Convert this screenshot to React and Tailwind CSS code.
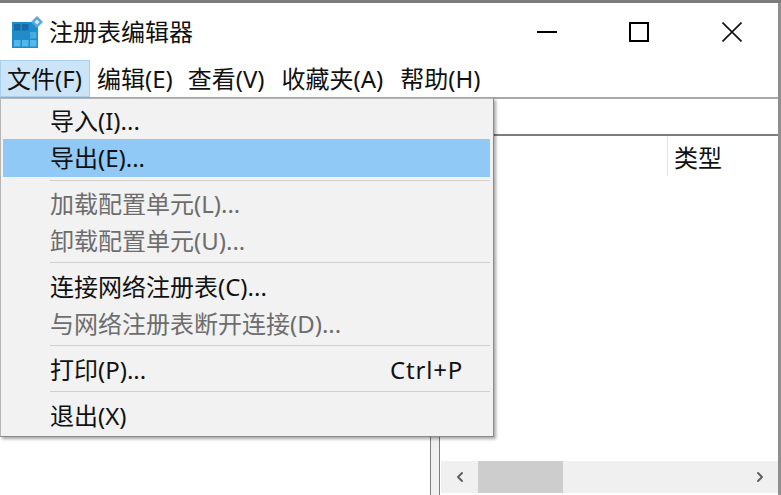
import React from 'react';
import { ChevronLeft, ChevronRight } from 'lucide-react';

const font = "font-['Noto_Sans','Noto_Sans_CJK_SC',sans-serif]";

const RegeditIcon = () => (
  <svg width="31" height="32" viewBox="0 0 31 32" className="shrink-0">
    <rect x="0" y="6" width="26" height="26" fill="#1a8fd0" />
    <rect x="2" y="8" width="6.5" height="6.5" fill="#176aa6" />
    <rect x="10" y="8" width="6.5" height="6.5" fill="#176aa6" />
    <rect x="2" y="16" width="6.5" height="6.5" fill="#2688c4" />
    <rect x="10" y="16" width="6.5" height="6.5" fill="#2688c4" />
    <rect x="18" y="16" width="6.5" height="6.5" fill="#48ace0" />
    <rect x="2" y="24" width="6.5" height="6.5" fill="#55b8e8" />
    <rect x="10" y="24" width="6.5" height="6.5" fill="#55b8e8" />
    <rect x="18" y="24" width="6.5" height="6.5" fill="#55b8e8" />
    <path d="M25 0 L31 6 L25 12 L19 6 Z" fill="#5aa9d6" />
    <path d="M25 3.5 L27.5 6 L25 8.5 L22.5 6 Z" fill="#d5ecf8" />
  </svg>
);

const MenuItem = ({ label, shortcut, disabled, active }) => (
  <div
    className={`flex items-center justify-between pl-[47px] pr-[27px] text-[24px] leading-none ${
      active ? 'h-[38px] bg-[#90c8f6] text-[#111]' : disabled ? 'h-[37px] text-[#6d6d6d]' : 'h-[37px] text-[#111]'
    }`}
  >
    <span>{label}</span>
    {shortcut && <span className="tracking-[0.8px]">{shortcut}</span>}
  </div>
);

const Divider = ({ className }) => <div className={`ml-[47px] h-px bg-[#d0d0d0] ${className}`} />;

export default function App() {
  return (
    <div className={`${font} relative flex flex-col w-[781px] h-[495px] overflow-hidden bg-white text-[#111]`}>
      {/* what is left of the window behind */}
      <div className="h-[3px] shrink-0 bg-[#7c7c7c]" />

      <div className="flex flex-col flex-1 min-h-0 border-r-[3px] border-[#8f8f8f]">
        {/* title bar */}
        <div className="flex items-center h-[57px] shrink-0 pl-[12px]">
          <RegeditIcon />
          <span className="ml-[6px] text-[24px] leading-none">注册表编辑器</span>
          <div className="flex items-center ml-auto">
            <div className="w-[20px] h-[2px] bg-black mr-[72px]" />
            <div className="w-[20px] h-[20px] border-2 border-black mr-[73px]" />
            <svg width="20" height="20" viewBox="0 0 20 20" className="mr-[36px]">
              <path d="M0.5 0.5 L19.5 19.5 M19.5 0.5 L0.5 19.5" stroke="#111" strokeWidth="1.6" />
            </svg>
          </div>
        </div>

        {/* menu bar */}
        <div className="flex items-stretch h-[39px] shrink-0 border-b-2 border-[#a8a8a8] text-[24px] leading-none">
          <div className="flex items-center w-[90px] pl-[6px] pt-[1px] bg-[#cce4f7] border border-[#a9d0ee]">文件(F)</div>
          <div className="flex items-center pt-[1px] ml-[7px]">编辑(E)</div>
          <div className="flex items-center pt-[1px] ml-[15px]">查看(V)</div>
          <div className="flex items-center pt-[1px] ml-[17px]">收藏夹(A)</div>
          <div className="flex items-center pt-[1px] ml-[17px]">帮助(H)</div>
        </div>

        {/* address bar */}
        <div className="h-[37px] shrink-0 border-b-2 border-[#7d7d7d]" />

        {/* panes */}
        <div className="flex flex-1 min-h-0">
          <div className="w-[430px] shrink-0" />
          <div className="w-[10px] shrink-0 bg-[#f0f0f0] border-x border-[#7f7f7f]" />
          <div className="flex flex-col flex-1 min-w-0">
            <div className="flex flex-1 items-start">
              <div className="w-[228px] h-[40px] shrink-0 border-r border-[#e5e5e5]" />
              <span className="ml-[6px] mt-[10px] text-[24px] leading-none">类型</span>
            </div>
            <div className="flex items-stretch h-[32px] mb-[2px] ml-[1px] bg-[#f0f0f0]">
              <div className="flex items-center justify-center w-[37px] text-[#606060]">
                <ChevronLeft size={16} strokeWidth={3} />
              </div>
              <div className="w-[85px] bg-[#cdcdcd]" />
              <div className="flex items-center justify-center w-[36px] ml-auto text-[#606060]">
                <ChevronRight size={16} strokeWidth={3} />
              </div>
            </div>
          </div>
        </div>
      </div>

      {/* open file menu */}
      <div className="absolute left-0 top-[98px] w-[494px] h-[339px] pt-[3px] pl-[2px] pr-[3px] bg-[#f2f2f2] border border-[#b5b5b5] border-r-[#8a8a8a] border-b-[#8a8a8a] shadow-[2px_2px_3px_rgba(0,0,0,0.35)]">
        <MenuItem label="导入(I)..." />
        <MenuItem label="导出(E)..." active />
        <Divider className="mt-[3px] mb-[4px]" />
        <MenuItem label="加载配置单元(L)..." disabled />
        <MenuItem label="卸载配置单元(U)..." disabled />
        <Divider className="mt-[3px] mb-[5px]" />
        <MenuItem label="连接网络注册表(C)..." />
        <MenuItem label="与网络注册表断开连接(D)..." disabled />
        <Divider className="mt-[3px] mb-[5px]" />
        <MenuItem label="打印(P)..." shortcut="Ctrl+P" />
        <Divider className="mt-[3px] mb-[5px]" />
        <MenuItem label="退出(X)" />
      </div>
    </div>
  );
}
